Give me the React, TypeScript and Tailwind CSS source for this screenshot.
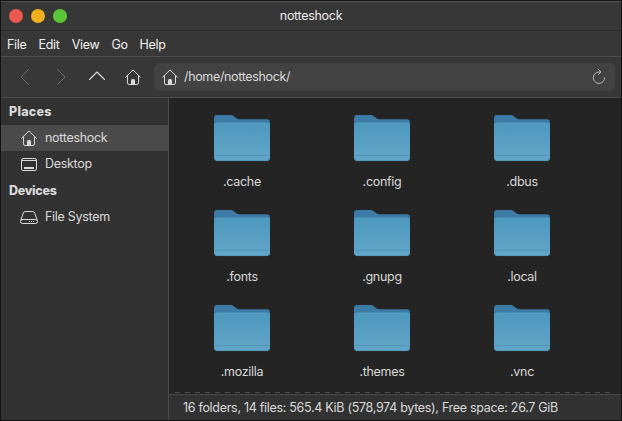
import React from "react";

const iconProps = {
  fill: "none",
  stroke: "currentColor",
  strokeLinecap: "round" as const,
  strokeLinejoin: "round" as const,
};

function HomeIcon() {
  return (
    <svg width="16" height="16" viewBox="0 0 16 16" className="shrink-0" {...iconProps}>
      <path d="M.6 8.2 8 .9l7.4 7.3M2.5 7v6.900q0 1.600 1.600 1.600h7.800q1.600 0 1.600-1.600V7" />
      <path d="M6 15.500v-4q0-1.500 1.500-1.500h1q1.500 0 1.500 1.500v4z" fill="currentColor" stroke="none" />
    </svg>
  );
}

function DesktopIcon() {
  return (
    <svg width="16" height="14" viewBox="0 0 16 14" className="mt-px shrink-0" {...iconProps}>
      <rect x=".5" y=".5" width="15" height="12" rx="1.6" />
      <path d="M1 2.5h14" />
      <path d="M3 10h10" strokeWidth="2" strokeLinecap="butt" />
    </svg>
  );
}

function DriveIcon() {
  return (
    <svg width="18" height="13" viewBox="0 0 18 13" className="mt-px shrink-0" {...iconProps}>
      <path d="M.8 9.2 3.3 2Q3.8.5 5.2.5h7.6q1.4 0 1.9 1.5l2.500 7.200" />
      <rect x=".5" y="8.5" width="17" height="4" rx="1.8" />
      <path d="M9 10.500h1M11 10.500h1M13 10.500h1" strokeLinecap="butt" />
    </svg>
  );
}

function Folder({ name }: { name: string }) {
  return (
    <div className="flex h-[95px] w-[140px] flex-col items-center">
      <svg width="56" height="47" viewBox="0 0 56 47" className="shrink-0">
        <defs>
          <linearGradient id="folderFront" x1="0" y1="0" x2="0" y2="1">
            <stop offset="0" stopColor="#4e98be" />
            <stop offset="1" stopColor="#62a6c8" />
          </linearGradient>
        </defs>
        <path d="M0 12V3q0-3 3-3h13.500q2 0 3.500 1.400l2.200 1.700q1.500 1.200 3.500 1.200H53q3 0 3 3V14H0z" fill="#3b7ba5" />
        <path d="M0 11q0-3.200 3-3.200h50q3 0 3 3.200v31.500q0 3.500-3.500 3.500h-49Q0 46 0 42.500z" fill="url(#folderFront)" />
        <path d="M.5 10q.7-1.800 2.500-1.800h50q1.800 0 2.500 1.800" fill="none" stroke="#5aa2c5" strokeWidth=".8" />
        <path d="M.5 40.500h55" stroke="#5095b5" strokeWidth="1" />
        <path d="M1 44q.7 1.600 2.500 1.600h49q1.800 0 2.500-1.600" fill="none" stroke="#5095b5" strokeWidth=".8" />
      </svg>
      <span className="mt-[11px] leading-[18px] text-[#d8d8d8]">{name}</span>
    </div>
  );
}

const menus = ["File", "Edit", "View", "Go", "Help"];
const folders = [".cache", ".config", ".dbus", ".fonts", ".gnupg", ".local", ".mozilla", ".themes", ".vnc"];

export default function App() {
  return (
    <div className="flex h-[421px] w-[622px] flex-col border border-[#121212] bg-[#373737] font-[Inter,sans-serif] text-[12.5px] tracking-[-0.3px] text-[#dadada]">
      <header className="relative flex h-[30px] items-center justify-center border-t border-b border-t-[#535353] border-b-[#2a2a2a] text-[#ececec]">
        <div className="absolute left-2 flex gap-2">
          <i className="size-[14px] rounded-full bg-[#ec5650]" />
          <i className="size-[14px] rounded-full bg-[#f2ae1c]" />
          <i className="size-[14px] rounded-full bg-[#58c838]" />
        </div>
        <span>notteshock</span>
      </header>
      <nav className="flex h-[26px] items-center gap-3 border-b border-[#4e4e4e] pt-[3px] pl-1.5 text-[#f0f0f0]">
        {menus.map((m) => <span key={m}>{m}</span>)}
      </nav>
      <div className="flex h-[41px] items-center border-b border-[#4b4b4b] pr-1.5">
        <svg width="48" height="16" viewBox="0 0 48 16" className="ml-[18px] text-[#707070]" {...iconProps}>
          <path d="M9.500 .500 2 8l7.500 7.500M38.500 .500 46 8l-7.500 7.500" />
        </svg>
        <svg width="16" height="10" viewBox="0 0 16 10" className="ml-[22px] -mt-0.5" {...iconProps}>
          <path d="M.5 8.500 8 1l7.500 7.500" strokeWidth="1.1" />
        </svg>
        <div className="ml-5"><HomeIcon /></div>
        <div className="ml-[13px] flex h-7 flex-1 items-center rounded-md bg-[#424242] pr-[9px] pl-2">
          <HomeIcon />
          <span className="ml-1.5 flex-1 tracking-[-0.35px]">/home/notteshock/</span>
          <svg width="14" height="16" viewBox="0 0 14 16" className="text-[#b8b8b8]" {...iconProps}>
            <path d="M8.500 3H7a5.700 5.700 0 1 0 5.700 5.700M6.500 .500 9 3 6.500 5.500" />
          </svg>
        </div>
      </div>
      <div className="flex min-h-0 flex-1">
        <aside className="w-[168px] border-r border-[#4b4b4b] bg-[#323232]">
          <h2 className="flex h-[27px] items-center pt-0.5 pl-2 text-[12.5px] font-extrabold tracking-[0.25px]">Places</h2>
          <div className="flex h-[26px] items-center bg-[#4a4a4a] pl-5"><HomeIcon /><span className="ml-2">notteshock</span></div>
          <div className="flex h-[26px] items-center pl-5"><DesktopIcon /><span className="ml-2">Desktop</span></div>
          <h2 className="flex h-[27px] items-center pt-0.5 pl-2 text-[12.5px] font-extrabold">Devices</h2>
          <div className="flex h-[26px] items-center pl-[19px]"><DriveIcon /><span className="ml-[7px]">File System</span></div>
        </aside>
        <main className="flex min-h-0 flex-1 flex-col bg-[#242424]">
          <div className="grid min-h-0 flex-1 grid-cols-[140px_140px_140px] content-start overflow-hidden pt-[17px] pl-[3px]">
            {folders.map((f) => <Folder key={f} name={f} />)}
          </div>
          <div className="mr-[11px] mb-px ml-1.5 h-px shrink-0 bg-[repeating-linear-gradient(90deg,#505050_0_5px,transparent_5px_10px)]" />
          <footer className="flex h-[26px] shrink-0 items-center border-t border-[#484848] bg-[#323232] pt-0.5 pl-[14px] whitespace-nowrap">
            16 folders, 14 files: 565.4 KiB (578,974 bytes), Free space: 26.7 GiB
          </footer>
        </main>
      </div>
    </div>
  );
}
